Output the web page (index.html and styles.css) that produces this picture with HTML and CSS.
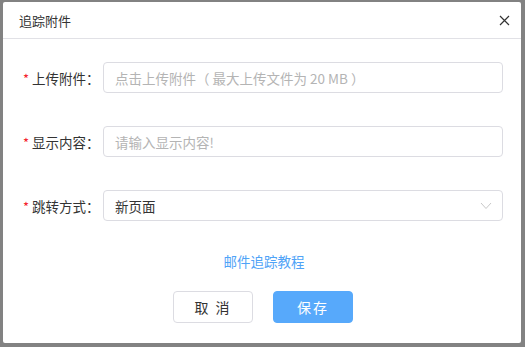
FILE: index.html
```html
<!DOCTYPE html>
<html lang="zh-CN">
<head>
    <meta charset="UTF-8">
    <title>追踪附件</title>
    <link rel="stylesheet" href="styles.css">
</head>
<body>
    <div class="dialog">
        <div class="dialog-header">
            <span class="dialog-title">追踪附件</span>
            <span class="dialog-close">
                <svg width="11" height="11" viewBox="0 0 11 11"><path d="M1 1L10 10M10 1L1 10" stroke="#333" stroke-width="1.2" fill="none"/></svg>
            </span>
        </div>

        <div class="dialog-body">
            <div class="form-row">
                <label class="form-label"><i>*</i>上传附件：</label>
                <div class="form-input placeholder">点击上传附件（ 最大上传文件为 20 MB ）</div>
            </div>
            <div class="form-row">
                <label class="form-label"><i>*</i>显示内容：</label>
                <div class="form-input placeholder">请输入显示内容!</div>
            </div>
            <div class="form-row last">
                <label class="form-label"><i>*</i>跳转方式：</label>
                <div class="form-input select">
                    <span>新页面</span>
                    <svg width="12" height="8" viewBox="0 0 12 8"><path d="M1 1L6 6.5L11 1" stroke="#c8c8c8" stroke-width="1" fill="none"/></svg>
                </div>
            </div>

            <a class="help-link" href="#">邮件追踪教程</a>

            <div class="dialog-footer">
                <button class="btn btn-default">取 消</button>
                <button class="btn btn-primary">保存</button>
            </div>
        </div>
    </div>
</body>
</html>
```

FILE: styles.css
```css
html, body {
    margin: 0;
    height: 100%;
}

body {
    background: #828282;
    padding: 2px 4px 4px 3px;
    box-sizing: border-box;
    font-family: "Noto Sans CJK SC", "Noto Sans", sans-serif;
    display: flex;
}

.dialog {
    flex: 1;
    background: #fff;
    border-radius: 2px;
    display: flex;
    flex-direction: column;
}

.dialog-header {
    height: 36px;
    border-bottom: 1px solid #e1e1e6;
    display: flex;
    align-items: center;
    justify-content: space-between;
    padding: 0 7px 0 16px;
}

.dialog-title {
    font-size: 13px;
    color: #333;
}

.dialog-close {
    display: flex;
    padding: 4px;
}

.dialog-body {
    padding: 23px 18px 0 20px;
    display: flex;
    flex-direction: column;
}

.form-row {
    display: flex;
    align-items: center;
    margin-bottom: 33px;
}

.form-row.last {
    margin-bottom: 30px;
}

.form-label {
    width: 80px;
    font-size: 13.5px;
    color: #333;
    display: flex;
    align-items: center;
}

.form-label i {
    font-style: normal;
    color: #f5222d;
    font-size: 13px;
    margin-right: 3px;
    position: relative;
    top: 1px;
}

.form-input {
    flex: 1;
    height: 31px;
    box-sizing: border-box;
    border: 1px solid #dcdce2;
    border-radius: 4px;
    padding: 0 11px;
    font-size: 13.5px;
    color: #333;
    display: flex;
    align-items: center;
}

.form-input.placeholder {
    color: #b4b4b4;
}

.form-input.select {
    justify-content: space-between;
    padding-right: 10px;
}

.help-link {
    align-self: center;
    color: #4fa3f7;
    font-size: 13.5px;
    text-decoration: none;
    margin: 0 0 20px;
    position: relative;
    left: 1px;
}

.dialog-footer {
    display: flex;
    justify-content: center;
    gap: 20px;
}

.btn {
    width: 80px;
    height: 32px;
    border-radius: 4px;
    font-family: inherit;
    font-size: 14px;
    letter-spacing: 2px;
    cursor: pointer;
}

.btn-default {
    background: #fff;
    border: 1px solid #dcdce2;
    color: #333;
}

.btn-primary {
    background: #57a9fb;
    border: 1px solid #57a9fb;
    color: #fff;
}
```
